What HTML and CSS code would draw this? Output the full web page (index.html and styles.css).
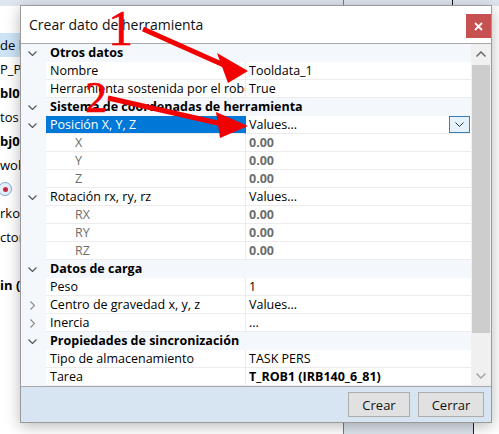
FILE: index.html
```html
<!DOCTYPE html>
<html lang="es">
<head>
<meta charset="utf-8">
<title>Crear dato de herramienta</title>
<link rel="stylesheet" href="styles.css">
</head>
<body>
<div class="desk">
  <div class="topstrip"><span class="vl vl-blue"></span><span class="vl vl-black"></span></div>
  <div class="bgbox"></div>
  <ul class="bglist">
    <li class="bg-sel">de herramienta</li>
    <li>P_Pos</li>
    <li class="b">bl0</li>
    <li>tos</li>
    <li class="b">bj0</li>
    <li>wobj</li>
    <li><span class="radio"><span class="dot"></span></span></li>
    <li>rkobj</li>
    <li>ctoria</li>
    <li></li>
    <li class="b">in (</li>
  </ul>

  <div class="dialog">
    <div class="titlebar">
      <span class="title">Crear dato de herramienta</span>
      <span class="close"><svg width="9" height="9" viewBox="0 0 9 9"><path d="M1 1 L8 8 M8 1 L1 8" stroke="#fff" stroke-width="1.8"/></svg></span>
    </div>
    <div class="gridwrap">
      <div class="grid">
        <div class="row cat"><span class="gut"><svg class="chev" viewBox="0 0 9 5"><polyline points="0.5,0.5 4.5,4.5 8.5,0.5"/></svg></span><span class="cattext">Otros datos</span></div>
        <div class="row"><span class="gut"></span><span class="lab">Nombre</span><span class="val">Tooldata_1</span></div>
        <div class="row"><span class="gut"></span><span class="lab">Herramienta sostenida por el robot</span><span class="val">True</span></div>
        <div class="row cat"><span class="gut"><svg class="chev" viewBox="0 0 9 5"><polyline points="0.5,0.5 4.5,4.5 8.5,0.5"/></svg></span><span class="cattext">Sistema de coordenadas de herramienta</span></div>
        <div class="row"><span class="gut"><svg class="chev" viewBox="0 0 9 5"><polyline points="0.5,0.5 4.5,4.5 8.5,0.5"/></svg></span><span class="lab sel">Posición X, Y, Z</span><span class="val">Values...<span class="ddbtn"><svg width="9" height="5" viewBox="0 0 9 5"><polyline points="0.5,0.5 4.5,4.5 8.5,0.5" fill="none" stroke="#333" stroke-width="1"/></svg></span></span></div>
        <div class="row"><span class="gut"></span><span class="lab sub">X</span><span class="val num">0.00</span></div>
        <div class="row"><span class="gut"></span><span class="lab sub">Y</span><span class="val num">0.00</span></div>
        <div class="row"><span class="gut"></span><span class="lab sub">Z</span><span class="val num">0.00</span></div>
        <div class="row"><span class="gut"><svg class="chev" viewBox="0 0 9 5"><polyline points="0.5,0.5 4.5,4.5 8.5,0.5"/></svg></span><span class="lab">Rotación rx, ry, rz</span><span class="val">Values...</span></div>
        <div class="row"><span class="gut"></span><span class="lab sub">RX</span><span class="val num">0.00</span></div>
        <div class="row"><span class="gut"></span><span class="lab sub">RY</span><span class="val num">0.00</span></div>
        <div class="row"><span class="gut"></span><span class="lab sub">RZ</span><span class="val num">0.00</span></div>
        <div class="row cat"><span class="gut"><svg class="chev" viewBox="0 0 9 5"><polyline points="0.5,0.5 4.5,4.5 8.5,0.5"/></svg></span><span class="cattext">Datos de carga</span></div>
        <div class="row"><span class="gut"></span><span class="lab">Peso</span><span class="val">1</span></div>
        <div class="row"><span class="gut"><svg class="chevr" viewBox="0 0 5 9"><polyline points="0.5,0.5 4.5,4.5 0.5,8.5"/></svg></span><span class="lab">Centro de gravedad x, y, z</span><span class="val">Values...</span></div>
        <div class="row"><span class="gut"><svg class="chevr" viewBox="0 0 5 9"><polyline points="0.5,0.5 4.5,4.5 0.5,8.5"/></svg></span><span class="lab">Inercia</span><span class="val">...</span></div>
        <div class="row cat"><span class="gut"><svg class="chev" viewBox="0 0 9 5"><polyline points="0.5,0.5 4.5,4.5 8.5,0.5"/></svg></span><span class="cattext">Propiedades de sincronización</span></div>
        <div class="row"><span class="gut"></span><span class="lab">Tipo de almacenamiento</span><span class="val">TASK PERS</span></div>
        <div class="row"><span class="gut"></span><span class="lab">Tarea</span><span class="val strong">T_ROB1 (IRB140_6_81)</span></div>
      </div>
      <div class="scrollbar">
        <span class="sarrow"><svg width="10" height="6" viewBox="0 0 10 6"><polyline points="0.5,5.5 5,1 9.5,5.5" fill="none" stroke="#606060" stroke-width="1.4"/></svg></span>
        <span class="track"><span class="thumb"></span></span>
        <span class="sarrow"><svg width="10" height="6" viewBox="0 0 10 6"><polyline points="0.5,0.5 5,5 9.5,0.5" fill="none" stroke="#a0a0a0" stroke-width="1.4"/></svg></span>
      </div>
    </div>
    <div class="footer">
      <button class="btn">Crear</button>
      <button class="btn">Cerrar</button>
    </div>
  </div>

  <svg class="annot" width="499" height="434" viewBox="0 0 499 434">
    <text x="108" y="45" class="num1">1</text>
    <text x="85" y="112" class="num2">2</text>
    <line x1="143" y1="29" x2="226" y2="66" stroke="#f20000" stroke-width="5"/>
    <polygon points="217,53 248,71 228,83" fill="#f20000"/>
    <line x1="108" y1="98" x2="222" y2="124" stroke="#f20000" stroke-width="5"/>
    <polygon points="216,112 248,126 220,138" fill="#f20000"/>
  </svg>
</div>
</body>
</html>
```
FILE: styles.css
```css
* { box-sizing: border-box; }
html, body { margin: 0; padding: 0; }
body {
  width: 499px;
  height: 434px;
  overflow: hidden;
  background: #ffffff;
  font-family: "Open Sans", "Segoe UI", "Liberation Sans", sans-serif;
  font-size: 12.5px;
  color: #000;
}
.desk {
  position: relative;
  width: 499px;
  height: 434px;
  overflow: hidden;
}
.topstrip {
  position: absolute;
  left: 0; top: 0;
  width: 499px; height: 6px;
  background: #dfe6ef;
}
.vl { position: absolute; top: 0; width: 1px; height: 6px; }
.vl-blue { left: 343px; background: #4a86d0; }
.vl-black { left: 452px; background: #111; }
.bgbox {
  position: absolute;
  left: 343px; top: 410px;
  width: 131px; height: 30px;
  background: #dde4ec;
  border-left: 1px solid #4a86d0;
  border-right: 1px solid #222;
}
.bglist {
  position: absolute;
  left: 0; top: 33px;
  margin: 0; padding: 0;
  list-style: none;
  width: 60px;
  font-size: 13px;
}
.bglist li {
  height: 24px;
  line-height: 24px;
  white-space: nowrap;
  display: flex;
  align-items: center;
}
.bglist li.bg-sel { background: #cde4f7; }
.bglist li.b { font-weight: 700; }
.radio {
  width: 14px; height: 14px;
  margin-left: -2px;
  border-radius: 50%;
  border: 1px solid #7aa7d8;
  background: #e6f0fb;
  display: flex; align-items: center; justify-content: center;
}
.radio .dot { width: 5px; height: 5px; border-radius: 50%; background: #c8283a; }

.dialog {
  position: absolute;
  left: 20px; top: 5px;
  width: 472px; height: 418px;
  border: 1px solid #9a9a9a;
  background: #fff;
  box-shadow: 0 3px 14px rgba(0,0,0,0.28);
  display: flex;
  flex-direction: column;
}
.titlebar {
  height: 38px;
  flex: none;
  display: flex;
  align-items: center;
  justify-content: space-between;
  padding-left: 8px;
  border-bottom: 1px solid #a8a8a8;
  padding-bottom: 1px;
}
.title { font-size: 14px; color: #111; }
.close {
  width: 25px; height: 24px;
  background: #c75050;
  display: flex; align-items: center; justify-content: center;
  margin-top: 4px;
}
.gridwrap {
  height: 342px;
  flex: none;
  display: flex;
  border-bottom: 1px solid #a8a8a8;
  box-sizing: content-box;
}
.grid { width: 450px; display: flex; flex-direction: column; }
.row {
  height: 18px;
  display: flex;
  line-height: 17px;
}
.gut {
  width: 25px; flex: none;
  background: #f4f7fb;
  display: flex; align-items: center; justify-content: center;
  padding-right: 3px;
}
.chev { width: 9px; height: 5px; fill: none; stroke: #5a5a5a; stroke-width: 1.2; }
.chevr { width: 5px; height: 9px; fill: none; stroke: #8a8a8a; stroke-width: 1.2; }
.row.cat { background: #f4f7fb; }
.cattext { font-weight: 700; padding-left: 4px; white-space: nowrap; line-height: 18px; }
.lab {
  width: 200px; flex: none;
  padding-left: 4px;
  white-space: nowrap;
  overflow: hidden;
  border-right: 1px solid #ececec;
  border-bottom: 1px solid #ececec;
}
.lab.sub { padding-left: 29px; color: #6d6d6d; }
.lab.sel { background: #0078d7; color: #fff; border-right-color: #0078d7; }
.val {
  flex: 1;
  padding-left: 3px;
  white-space: nowrap;
  border-bottom: 1px solid #ececec;
  display: flex;
  justify-content: space-between;
  padding-right: 1px;
}
.val.num { color: #6d6d6d; font-weight: 700; }
.val.strong { font-weight: 700; }
.ddbtn {
  width: 21px; height: 17px;
  border: 1px solid #3c7fb1;
  background: #e5f1fb;
  display: flex; align-items: center; justify-content: center;
}
.scrollbar {
  width: 20px;
  background: #f0f0f0;
  display: flex;
  flex-direction: column;
}
.sarrow { height: 20px; display: flex; align-items: center; justify-content: center; flex: none; }
.track { flex: 1; padding: 1px 1px 0 1px; display: flex; flex-direction: column; }
.thumb { height: 268px; background: #cdcdcd; }
.footer {
  flex: 1;
  background: #d7e4f2;
  display: flex;
  justify-content: flex-end;
  align-items: flex-start;
  gap: 8px;
  padding: 5px 7px 0 0;
}
.btn {
  font-family: inherit;
  font-size: 13px;
  color: #111;
  height: 25px;
  background: #e1e1e1;
  border: 1px solid #adadad;
  padding: 0;
}
.btn:first-child { width: 62px; }
.btn:last-child { width: 66px; }
.annot { position: absolute; left: 0; top: 0; pointer-events: none; }
.num1, .num2 {
  font-family: "Liberation Serif", "DejaVu Serif", serif;
  fill: #f20000;
  stroke: #f20000;
  stroke-width: 0.6;
}
.num1 { font-size: 50px; }
.num2 { font-size: 44px; }
```
